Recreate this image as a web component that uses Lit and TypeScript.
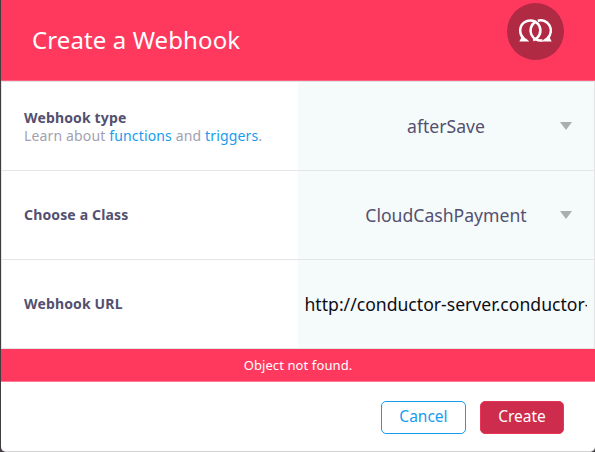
import { LitElement, html, css, svg } from "lit";
import { customElement, property } from "lit/decorators.js";

@customElement("form-field")
class FormField extends LitElement {
  @property() label = "";

  static styles = css`
    :host {
      display: grid;
      grid-template-columns: 296px 1fr;
      height: 88px;
      border-bottom: 1px solid #e3e5e6;
    }
    .label {
      display: flex;
      flex-direction: column;
      justify-content: center;
      padding: 0 0 1px 22px;
      color: #535070;
      font-size: 14px;
      font-weight: 700;
      letter-spacing: 0.15px;
      line-height: 18px;
    }
    ::slotted(.description) {
      margin-bottom: -2px;
    }
    .input {
      display: flex;
      align-items: center;
      min-width: 0;
      background: #f5fafb;
    }
  `;

  render() {
    return html`
      <div class="label"><span>${this.label}</span><slot name="description"></slot></div>
      <div class="input"><slot></slot></div>
    `;
  }
}

@customElement("drop-down")
class DropDown extends LitElement {
  @property() value = "";

  static styles = css`
    :host {
      display: grid;
      grid-template-columns: 1fr 12px;
      align-items: center;
      width: 100%;
      box-sizing: border-box;
      padding: 0 22px 1px 34px;
      color: #535070;
      font-size: 17.6px;
      line-height: 24px;
      text-align: center;
    }
    .arrow {
      display: block;
      width: 12px;
      height: 8px;
      margin-top: 1px;
      fill: #a9aeae;
    }
  `;

  render() {
    return html`
      <span>${this.value}</span>
      <svg class="arrow" viewBox="0 0 12 8"><path d="M0 0H12L6 8Z" /></svg>
    `;
  }
}

const hookIcon = svg`
  <circle cx="28.5" cy="28.5" r="28.5" fill="#b02a43" />
  <g fill="none" stroke="#fff" stroke-width="2.5">
    <path d="M16.2 34.7A10.1 10.1 0 1 1 26.2 37.2" />
    <path d="M30.8 17.8A10.1 10.1 0 0 1 40.8 34.7" />
    <path d="M28 19.1A10.1 10.1 0 0 0 35.6 37.4" />
  </g>
  <path d="M13.6 32L14 35.2L12.3 38.6H22.2L20.8 37L17.2 34.2Z" fill="#fff" />
  <path d="M43.4 32L43 35.2L44.7 38.6H35.2L36.2 37L39.8 34.2Z" fill="#fff" />
`;

@customElement("app-root")
class AppRoot extends LitElement {
  static styles = css`
    :host {
      display: block;
      height: 452px;
      box-sizing: border-box;
      padding-left: 1px;
      overflow: hidden;
      background: #403c41;
      font-family: "Noto Sans", sans-serif;
    }
    .modal {
      display: flex;
      flex-direction: column;
      height: 452px;
      box-sizing: border-box;
      overflow: hidden;
      border-bottom: 1px solid #d3d3d3;
      border-radius: 0 0 5px 5px;
      background: #fff;
    }
    .header {
      display: flex;
      justify-content: space-between;
      height: 80px;
      padding: 0 31px;
      border-bottom: 1px solid #ff6381;
      background: #ff395e;
      color: #fff;
    }
    .title {
      font-size: 24px;
      letter-spacing: 0.1px;
      line-height: 80px;
      white-space: nowrap;
    }
    .icon {
      width: 57px;
      height: 57px;
      margin-top: 3px;
    }
    .fields {
      border: 1px solid #e3e3e6;
      border-bottom: 0;
    }
    .description {
      color: #a2a1b0;
      font-weight: 400;
    }
    .link {
      color: #169cee;
    }
    .url {
      margin: 0 7px 1px 6.5px;
      overflow: hidden;
      color: #0e0c15;
      font-size: 17.6px;
      line-height: 26px;
      white-space: nowrap;
    }
    .error {
      height: 32px;
      border-bottom: 1px solid #ff7b94;
      background: #ff395e;
      color: #fff;
      font-size: 13px;
      letter-spacing: 0.1px;
      line-height: 33px;
      text-align: center;
    }
    .footer {
      display: flex;
      justify-content: flex-end;
      gap: 14px;
      padding: 19px 31px 0 0;
    }
    .button {
      box-sizing: border-box;
      height: 33px;
      border: 1px solid #169cee;
      border-radius: 5px;
      color: #169cee;
      font-size: 15.5px;
      line-height: 29px;
      text-align: center;
    }
    .cancel {
      width: 85px;
    }
    .create {
      width: 84px;
      border-color: #e83455;
      background: #ce2c4c;
      color: #fff;
    }
  `;

  render() {
    return html`
      <div class="modal">
        <div class="header">
          <div class="title">Create a Webhook</div>
          <svg class="icon" viewBox="0 0 57 57">${hookIcon}</svg>
        </div>
        <div class="fields">
          <form-field label="Webhook type">
            <span slot="description" class="description">Learn about <a class="link">functions</a> and <a class="link">triggers</a>.</span>
            <drop-down value="afterSave"></drop-down>
          </form-field>
          <form-field label="Choose a Class">
            <drop-down value="CloudCashPayment"></drop-down>
          </form-field>
          <form-field label="Webhook URL">
            <div class="url">http://conductor-server.conductor-</div>
          </form-field>
        </div>
        <div class="error">Object not found.</div>
        <div class="footer">
          <div class="button cancel">Cancel</div>
          <div class="button create">Create</div>
        </div>
      </div>
    `;
  }
}
